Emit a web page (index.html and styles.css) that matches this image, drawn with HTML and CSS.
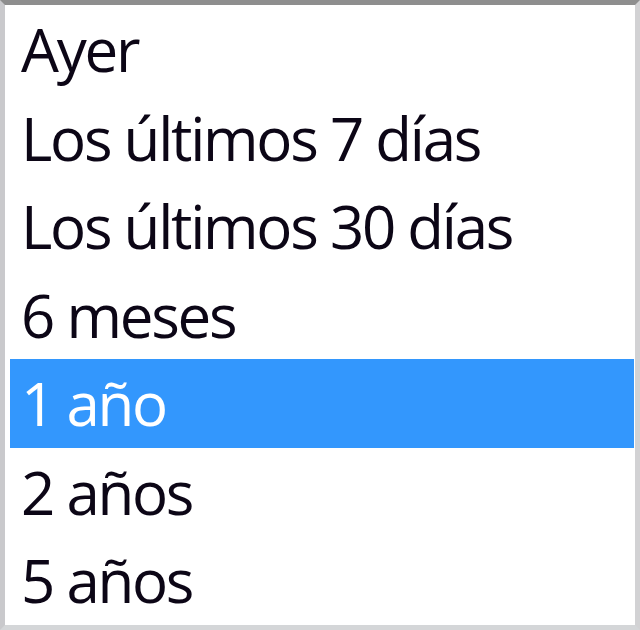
FILE: index.html
```html
<!DOCTYPE html>
<html lang="es">
<head>
<meta charset="utf-8">
<link rel="stylesheet" href="styles.css">
</head>
<body>
<ul class="list">
  <li class="item">Ayer</li>
  <li class="item">Los últimos 7 días</li>
  <li class="item">Los últimos 30 días</li>
  <li class="item">6 meses</li>
  <li class="item selected">1 año</li>
  <li class="item">2 años</li>
  <li class="item">5 años</li>
</ul>
</body>
</html>
```
FILE: styles.css
```css
html, body {
  margin: 0;
  padding: 0;
  background: #ffffff;
}
.list {
  list-style: none;
  margin: 0;
  padding: 0 1px 0 5px;
  width: 640px;
  height: 630px;
  box-sizing: border-box;
  border-top: 5px solid #8e8e8e;
  border-left: 5px solid #c9c9cc;
  border-right: 5px solid #d2d2d4;
  border-bottom: 5px solid #d4d6d8;
  display: flex;
  flex-direction: column;
  font-family: "Open Sans", "Noto Sans", sans-serif;
  font-size: 60px;
  letter-spacing: -2.25px;
  color: #0c0616;
}
.item {
  height: 88.5px;
  line-height: 88.5px;
  padding-left: 11px;
  white-space: nowrap;
}
.selected {
  background: #3397fd;
  color: #ffffff;
}
```
